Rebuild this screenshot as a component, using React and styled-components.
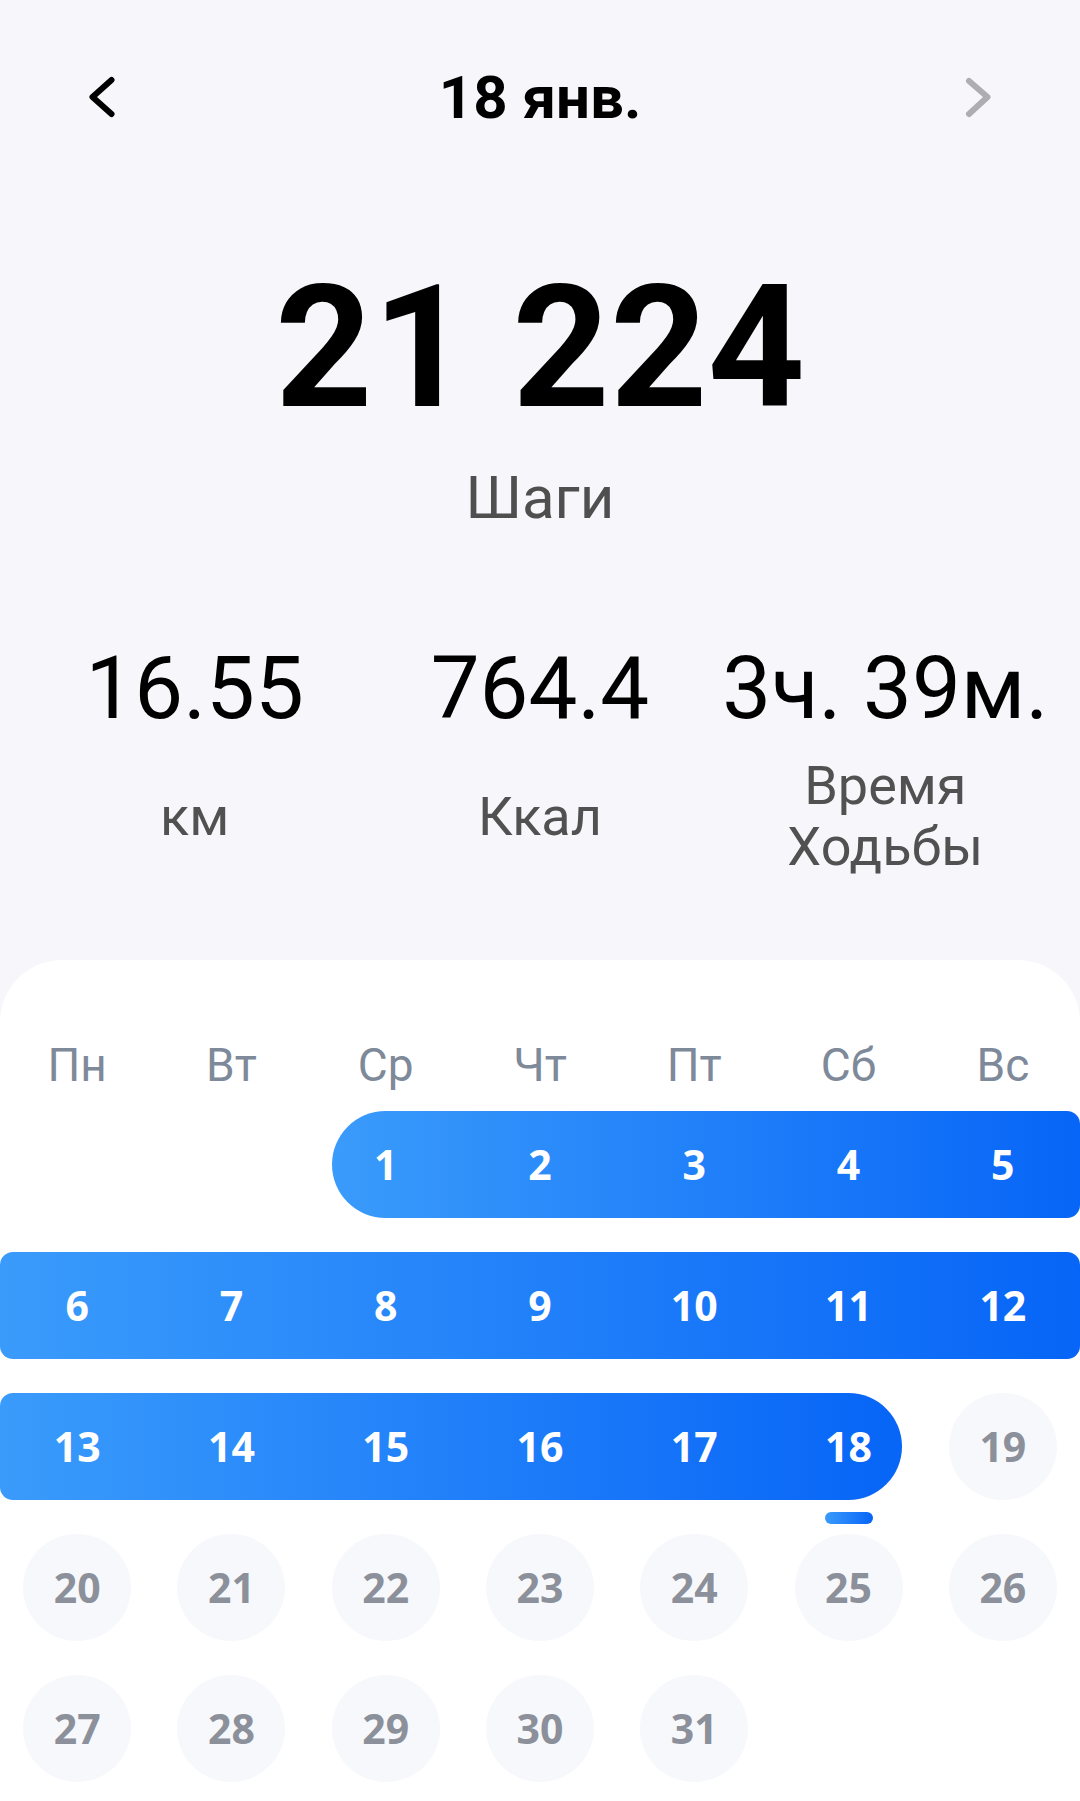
import React from "react";
import styled, { createGlobalStyle } from "styled-components";

const Global = createGlobalStyle`
  html, body { margin: 0; padding: 0; background: #F7F7FB; }
  body { font-family: Roboto, "Noto Sans", sans-serif; -webkit-font-smoothing: antialiased; }
  * { box-sizing: border-box; }
`;

const Page = styled.div`
  width: 1080px;
  min-height: 1801px;
  background: #F7F7FB;
  display: flex;
  flex-direction: column;
  overflow: hidden;
`;

const Header = styled.header`
  margin-top: 63px;
  height: 70px;
  padding: 0 89px;
  display: flex;
  align-items: center;
  justify-content: space-between;
`;

const Title = styled.h1`
  margin: 0;
  font-family: Roboto, sans-serif;
  font-weight: 700;
  font-size: 60px;
  line-height: 70px;
  color: #000;
`;

const NavIcon = styled.svg`
  width: 26px;
  height: 44px;
  display: block;
`;

const BigNumber = styled.div`
  margin-top: 115px;
  text-align: center;
  font-family: Roboto, sans-serif;
  font-weight: 700;
  font-size: 170px;
  line-height: 200px;
  color: #000;
`;

const BigLabel = styled.div`
  margin-top: 15px;
  text-align: center;
  font-family: Roboto, sans-serif;
  font-size: 60px;
  line-height: 70px;
  color: #4f4f4f;
`;

const Stats = styled.section`
  margin-top: 105px;
  padding: 0 22px;
  display: grid;
  grid-template-columns: repeat(3, 1fr);
`;

const Stat = styled.div`
  display: flex;
  flex-direction: column;
  align-items: center;
  text-align: center;
`;

const StatValue = styled.div`
  font-family: Roboto, sans-serif;
  font-size: 87px;
  line-height: 100px;
  color: #000;
  white-space: nowrap;
`;

const StatLabel = styled.div`
  margin-top: 17px;
  height: 122px;
  display: flex;
  flex-direction: column;
  justify-content: center;
  font-family: Roboto, sans-serif;
  font-size: 54px;
  line-height: 61px;
  color: #515151;
`;

const Card = styled.section`
  margin-top: 83px;
  flex: 1;
  background: #fff;
  border-radius: 62px 62px 0 0;
  padding: 78px 0 19px;
`;

const WeekHeader = styled.div`
  display: grid;
  grid-template-columns: repeat(7, 1fr);
  height: 54px;
`;

const WeekDay = styled.div`
  text-align: center;
  font-family: Roboto, sans-serif;
  font-size: 46px;
  line-height: 54px;
  color: #7e8999;
`;

const Weeks = styled.div`
  margin-top: 19px;
  display: flex;
  flex-direction: column;
  gap: 34px;
`;

const WeekRow = styled.div`
  display: grid;
  grid-template-columns: repeat(7, 1fr);
  grid-template-rows: 107px;
`;

const RangeBar = styled.div`
  grid-row: 1;
  background: linear-gradient(90deg, #3a9bfb 0%, #0765f7 100%);
  margin-left: ${(p) => (p.$roundStart ? "23.6px" : "0")};
  margin-right: ${(p) => (p.$roundEnd ? "23.6px" : "0")};
  border-radius: ${(p) => (p.$roundStart ? "53.5px" : "13px")}
    ${(p) => (p.$roundEnd ? "53.5px" : "13px")}
    ${(p) => (p.$roundEnd ? "53.5px" : "13px")}
    ${(p) => (p.$roundStart ? "53.5px" : "13px")};
`;

const DayCell = styled.div`
  grid-row: 1;
  position: relative;
  display: flex;
  align-items: center;
  justify-content: center;
`;

const DayNum = styled.div`
  width: 108px;
  height: 107px;
  border-radius: 50%;
  display: flex;
  align-items: center;
  justify-content: center;
  background: ${(p) => (p.$active ? "transparent" : "#F7F8FB")};
  color: ${(p) => (p.$active ? "#ffffff" : "#8b909a")};
  font-family: "Open Sans", "Noto Sans", sans-serif;
  font-weight: 700;
  font-size: 41px;
  line-height: 1;
`;

const TodayMark = styled.span`
  position: absolute;
  left: 50%;
  top: calc(100% + 12px);
  width: 48px;
  height: 12px;
  margin-left: -24px;
  border-radius: 6px;
  background: linear-gradient(90deg, #3a9bfb, #0765f7);
`;

const weekDays = ["Пн", "Вт", "Ср", "Чт", "Пт", "Сб", "Вс"];
const FIRST_OFFSET = 2; // Jan 1 on Wednesday
const DAYS = 31;
const RANGE_END = 18;
const TODAY = 18;

function buildWeeks() {
  const cells = [];
  for (let i = 0; i < FIRST_OFFSET; i++) cells.push(null);
  for (let d = 1; d <= DAYS; d++) cells.push(d);
  const weeks = [];
  for (let i = 0; i < cells.length; i += 7) weeks.push(cells.slice(i, i + 7));
  return weeks;
}

function Week({ days }) {
  const inRange = days
    .map((d, i) => ({ d, i }))
    .filter((x) => x.d !== null && x.d <= RANGE_END);
  let bar = null;
  if (inRange.length) {
    const first = inRange[0];
    const last = inRange[inRange.length - 1];
    bar = (
      <RangeBar
        $roundStart={first.d === 1}
        $roundEnd={last.d === RANGE_END}
        style={{ gridColumn: `${first.i + 1} / ${last.i + 2}` }}
      />
    );
  }
  return (
    <WeekRow>
      {bar}
      {days.map((d, i) =>
        d === null ? null : (
          <DayCell key={d} style={{ gridColumn: i + 1 }}>
            <DayNum $active={d <= RANGE_END}>{d}</DayNum>
            {d === TODAY && <TodayMark />}
          </DayCell>
        )
      )}
    </WeekRow>
  );
}

export default function App() {
  const weeks = buildWeeks();
  return (
    <Page>
      <Global />
      <Header>
        <NavIcon viewBox="0 0 26 44" fill="none">
          <path
            d="M22.5 4 L3.5 21 L22.5 38"
            stroke="#000"
            strokeWidth="6"
            strokeLinecap="round"
            strokeLinejoin="round"
          />
        </NavIcon>
        <Title>18 янв.</Title>
        <NavIcon viewBox="0 0 26 44" fill="none">
          <path
            d="M4 5 L22.5 21 L4 38"
            stroke="#ADADB2"
            strokeWidth="6"
            strokeLinecap="round"
            strokeLinejoin="round"
          />
        </NavIcon>
      </Header>

      <BigNumber>21 224</BigNumber>
      <BigLabel>Шаги</BigLabel>

      <Stats>
        <Stat>
          <StatValue>16.55</StatValue>
          <StatLabel>км</StatLabel>
        </Stat>
        <Stat>
          <StatValue>764.4</StatValue>
          <StatLabel>Ккал</StatLabel>
        </Stat>
        <Stat>
          <StatValue>3ч. 39м.</StatValue>
          <StatLabel>
            <span>Время</span>
            <span>Ходьбы</span>
          </StatLabel>
        </Stat>
      </Stats>

      <Card>
        <WeekHeader>
          {weekDays.map((w) => (
            <WeekDay key={w}>{w}</WeekDay>
          ))}
        </WeekHeader>
        <Weeks>
          {weeks.map((w, i) => (
            <Week key={i} days={w} />
          ))}
        </Weeks>
      </Card>
    </Page>
  );
}
